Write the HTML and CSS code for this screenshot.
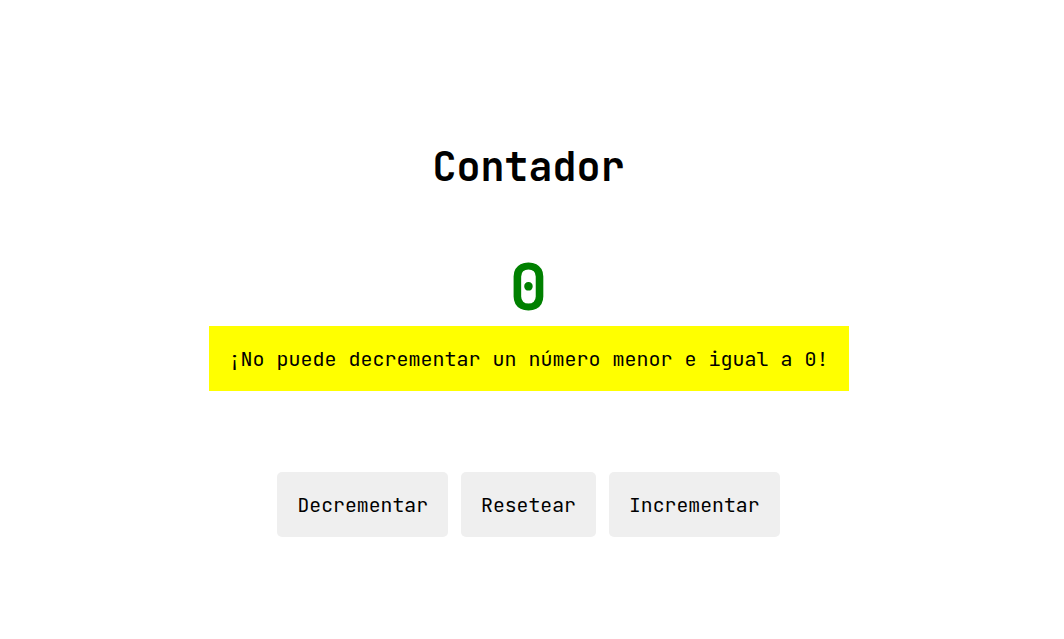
FILE: index.html
```html
<!DOCTYPE html>
<html lang="es">
<head>
<meta charset="utf-8">
<title>Contador</title>
<link rel="stylesheet" href="styles.css">
</head>
<body>
<main class="app">
  <h1 class="title">Contador</h1>
  <div class="count">0</div>
  <p class="warning">¡No puede decrementar un número menor e igual a 0!</p>
  <div class="actions">
    <button class="btn">Decrementar</button>
    <button class="btn">Resetear</button>
    <button class="btn">Incrementar</button>
  </div>
</main>
</body>
</html>
```
FILE: styles.css
```css
html, body {
  margin: 0;
  padding: 0;
  background: #ffffff;
}
body {
  font-family: "JetBrains Mono", "DejaVu Sans Mono", "Liberation Mono", monospace;
  color: #000000;
}
.app {
  display: flex;
  flex-direction: column;
  align-items: center;
  padding-top: 140px;
  padding-right: 7px;
}
.title {
  margin: 0;
  font-size: 40px;
  font-weight: 700;
  line-height: 54px;
  height: 54px;
}
.count {
  margin-top: 58px;
  font-size: 64px;
  font-weight: 700;
  line-height: 70px;
  height: 74px;
  color: #008000;
}
.warning {
  margin: 0;
  width: 640px;
  height: 65px;
  box-sizing: border-box;
  display: flex;
  align-items: center;
  justify-content: center;
  background: #ffff00;
  font-size: 20px;
}
.actions {
  margin-top: 81px;
  display: flex;
  gap: 13px;
}
.btn {
  font-family: inherit;
  font-size: 19.8px;
  color: #000000;
  background: #efefef;
  border: none;
  border-radius: 5px;
  height: 65px;
  padding: 0 20px;
}
```
